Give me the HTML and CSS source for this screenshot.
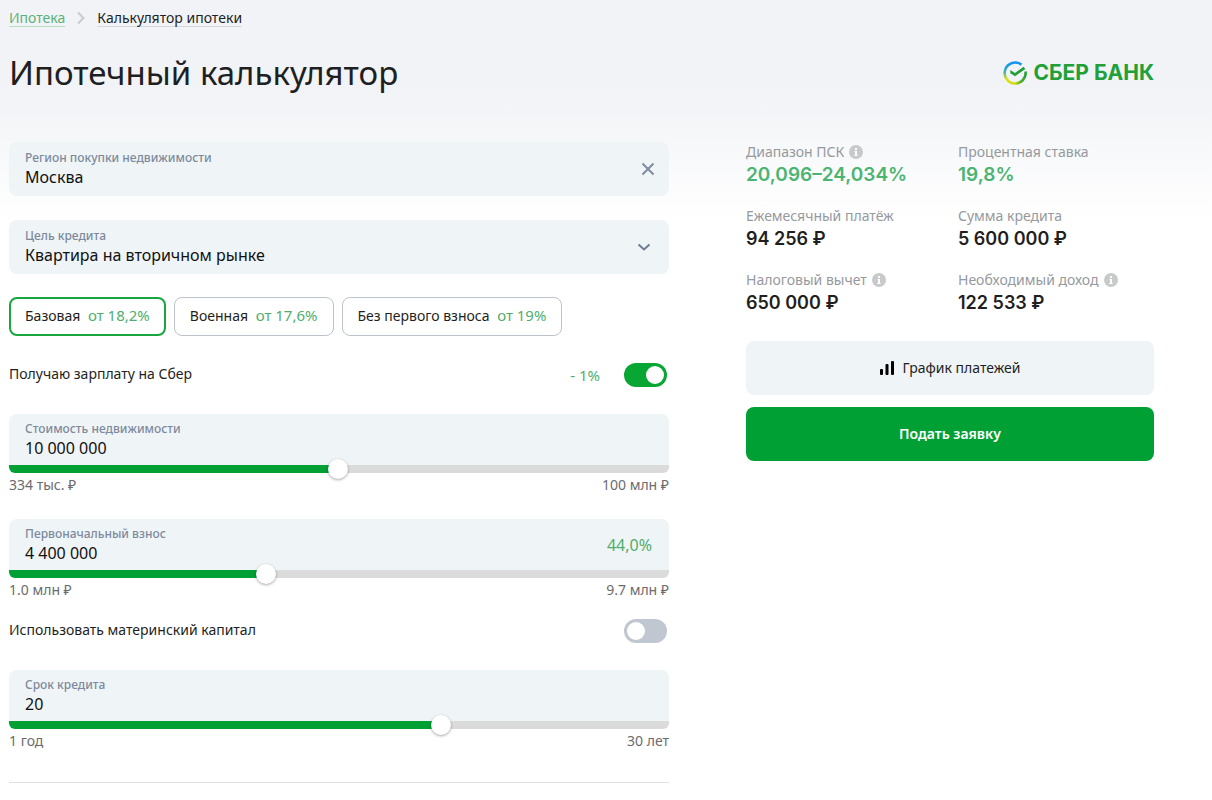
FILE: index.html
```html
<!DOCTYPE html>
<html lang="ru">
<head>
<meta charset="utf-8">
<meta name="viewport" content="width=device-width, initial-scale=1">
<title>Ипотечный калькулятор</title>
<link rel="stylesheet" href="styles.css">
</head>
<body>
<div class="page">
  <header class="header">
    <nav class="crumbs" aria-label="Навигация">
      <a class="crumb crumb-parent" href="#">Ипотека</a>
      <svg class="crumb-arrow" viewBox="0 0 8 14" aria-hidden="true"><path d="M1 1.500 6.500 7 1 12.500"/></svg>
      <a class="crumb" href="#">Калькулятор ипотеки</a>
    </nav>
    <div class="title-row">
      <h1 class="title">Ипотечный калькулятор</h1>
      <div class="logo">
        <svg class="logo-mark" viewBox="0 0 24 24" aria-hidden="true">
          <defs>
            <linearGradient id="ring-left" x1="0" y1="0" x2="0" y2="1">
              <stop offset="0" stop-color="#1593f2"/>
              <stop offset=".2" stop-color="#1f9be0"/>
              <stop offset=".5" stop-color="#55b99a"/>
              <stop offset=".8" stop-color="#e3e20b"/>
              <stop offset="1" stop-color="#d5dc16"/>
            </linearGradient>
            <linearGradient id="ring-right" x1="0" y1="0" x2="1" y2="0">
              <stop offset="0" stop-color="#d5dc16"/>
              <stop offset=".55" stop-color="#54ae2c"/>
              <stop offset="1" stop-color="#21a038"/>
            </linearGradient>
          </defs>
          <path d="M18.500 3.600A10.500 10.500 0 1 0 12 22.500" fill="none" stroke="url(#ring-left)" stroke-width="2.600"/>
          <path d="M12 22.500A10.500 10.500 0 0 0 22.500 10.500" fill="none" stroke="url(#ring-right)" stroke-width="2.600"/>
          <path d="M7.300 9 12 12 20.600 5.800 22.300 8.100 12 15.300 7.300 12.300Z" fill="#21a038"/>
        </svg>
        <span class="logo-text">СБЕР БАНК</span>
      </div>
    </div>
  </header>

  <main class="content">
    <form class="form">
      <div class="field">
        <label class="field-label" for="region">Регион покупки недвижимости</label>
        <input class="field-control" id="region" type="text" value="Москва">
        <button class="field-icon" type="button" aria-label="Очистить">
          <svg class="icon-close" viewBox="0 0 14 14" aria-hidden="true"><path d="M1.500 1.500l11 11M12.500 1.500l-11 11"/></svg>
        </button>
      </div>

      <div class="field">
        <label class="field-label" for="purpose">Цель кредита</label>
        <select class="field-control" id="purpose"><option>Квартира на вторичном рынке</option></select>
        <svg class="field-icon icon-chevron" viewBox="0 0 14 8" aria-hidden="true"><path d="M1.500 1.500 7 6.500l5.500-5"/></svg>
      </div>

      <div class="programs">
        <button class="program program-active" type="button" aria-pressed="true">Базовая <span class="rate">от 18,2%</span></button>
        <button class="program" type="button" aria-pressed="false">Военная <span class="rate">от 17,6%</span></button>
        <button class="program" type="button" aria-pressed="false">Без первого взноса <span class="rate">от 19%</span></button>
      </div>

      <div class="option">
        <label class="option-label" for="salary">Получаю зарплату на Сбер</label>
        <span class="rate">- 1%</span>
        <input class="switch" id="salary" type="checkbox" checked>
      </div>

      <div class="amount">
        <div class="field field-range">
          <label class="field-label" for="price">Стоимость недвижимости</label>
          <input class="field-control" id="price" type="text" value="10 000 000">
        </div>
        <input class="range" type="range" min="0" max="1000" value="498" style="--fill: 49.8%" aria-label="Стоимость недвижимости">
        <div class="limits"><span>334 тыс. ₽</span><span>100 млн ₽</span></div>
      </div>

      <div class="amount">
        <div class="field field-range">
          <label class="field-label" for="deposit">Первоначальный взнос</label>
          <input class="field-control" id="deposit" type="text" value="4 400 000">
          <span class="field-icon share">44,0%</span>
        </div>
        <input class="range" type="range" min="0" max="1000" value="386" style="--fill: 38.6%" aria-label="Первоначальный взнос">
        <div class="limits"><span>1.0 млн ₽</span><span>9.7 млн ₽</span></div>
      </div>

      <div class="option option-capital">
        <label class="option-label" for="capital">Использовать материнский капитал</label>
        <input class="switch" id="capital" type="checkbox">
      </div>

      <div class="amount">
        <div class="field field-range">
          <label class="field-label" for="term">Срок кредита</label>
          <input class="field-control" id="term" type="text" value="20">
        </div>
        <input class="range" type="range" min="0" max="1000" value="659" style="--fill: 65.9%" aria-label="Срок кредита">
        <div class="limits"><span>1 год</span><span>30 лет</span></div>
      </div>
      <hr class="divider">
    </form>

    <aside class="summary">
      <dl class="results">
        <div class="result">
          <dt class="result-name">Диапазон ПСК
            <svg class="info" viewBox="0 0 14 14" aria-hidden="true"><circle cx="7" cy="7" r="7" fill="#c7c9cb"/><path d="M6 3h2v2H6zM5.500 6H8v4h.7v1H5.300v-1H6V7h-.5z" fill="#fff"/></svg>
          </dt>
          <dd class="result-value result-green">20,096–24,034%</dd>
        </div>
        <div class="result">
          <dt class="result-name">Процентная ставка</dt>
          <dd class="result-value result-green">19,8%</dd>
        </div>
        <div class="result">
          <dt class="result-name">Ежемесячный платёж</dt>
          <dd class="result-value">94 256 ₽</dd>
        </div>
        <div class="result">
          <dt class="result-name">Сумма кредита</dt>
          <dd class="result-value">5 600 000 ₽</dd>
        </div>
        <div class="result">
          <dt class="result-name">Налоговый вычет
            <svg class="info" viewBox="0 0 14 14" aria-hidden="true"><circle cx="7" cy="7" r="7" fill="#c7c9cb"/><path d="M6 3h2v2H6zM5.500 6H8v4h.7v1H5.300v-1H6V7h-.5z" fill="#fff"/></svg>
          </dt>
          <dd class="result-value">650 000 ₽</dd>
        </div>
        <div class="result">
          <dt class="result-name">Необходимый доход
            <svg class="info" viewBox="0 0 14 14" aria-hidden="true"><circle cx="7" cy="7" r="7" fill="#c7c9cb"/><path d="M6 3h2v2H6zM5.500 6H8v4h.7v1H5.300v-1H6V7h-.5z" fill="#fff"/></svg>
          </dt>
          <dd class="result-value">122 533 ₽</dd>
        </div>
      </dl>
      <button class="action" type="button">
        <svg class="icon-bars" viewBox="0 0 14 14" aria-hidden="true"><rect x="0" y="8" width="3" height="6" rx="1"/><rect x="5.500" y="3" width="3" height="11" rx="1"/><rect x="11" y="0" width="3" height="14" rx="1"/></svg>
        График платежей
      </button>
      <button class="action action-primary" type="button">Подать заявку</button>
    </aside>
  </main>
</div>
</body>
</html>
```
FILE: styles.css
```css
* {
  box-sizing: border-box;
}

body {
  margin: 0;
  background: #fff linear-gradient(#f1f3f6 0, #f1f3f6 90px, #fff 220px) no-repeat;
  color: #1f1f22;
  font: 14px/20px "Noto Sans", "Open Sans", sans-serif;
}

button,
input,
select {
  margin: 0;
  padding: 0;
  border: 0;
  background: none;
  color: inherit;
  font: inherit;
}

button {
  cursor: pointer;
}

.page {
  padding: 8px 58px 16px 9px;
}

.crumbs {
  display: flex;
  align-items: center;
  gap: 12px;
}

.crumb {
  height: 19px;
  border-bottom: 1px solid #d5d9dc;
  color: #1f1f22;
  text-decoration: none;
}

.crumb-parent {
  border-color: #b3dfc0;
  color: #5ab27a;
}

.crumb-arrow {
  width: 8px;
  height: 14px;
  fill: none;
  stroke: #c9cccf;
  stroke-width: 2;
}

.title-row {
  display: flex;
  align-items: center;
  justify-content: space-between;
  margin: 24px 0 47px;
}

.title {
  margin: 0;
  font-size: 33px;
  font-weight: 400;
  line-height: 44px;
}

.logo {
  display: flex;
  align-items: center;
  gap: 6px;
}

.logo-mark {
  width: 24px;
  height: 24px;
}

.logo-text {
  color: #21a038;
  font: 700 21px/24px Inter, sans-serif;
}

.content {
  display: grid;
  grid-template-columns: 660fr 408fr;
  gap: 77px;
  align-items: start;
}

.field {
  display: flex;
  flex-direction: column;
  position: relative;
  height: 54px;
  margin-bottom: 24px;
  padding: 7px 16px 0;
  border-radius: 8px;
  background: #eff4f7;
}

.field-label {
  color: #7d8a9c;
  font-size: 12px;
  font-weight: 500;
  line-height: 18px;
}

.field-control {
  width: 100%;
  height: 20px;
  outline: 0;
  appearance: none;
  color: #111;
  font-size: 16px;
  line-height: 20px;
}

.field-icon {
  display: flex;
  align-items: center;
  position: absolute;
  top: 0;
  right: 14px;
  height: 100%;
}

.icon-close {
  width: 14px;
  height: 14px;
  fill: none;
  stroke: #7f8ca0;
  stroke-width: 2;
}

.icon-chevron {
  right: 18px;
  width: 14px;
  fill: none;
  stroke: #6f7c96;
  stroke-width: 2;
}

.programs {
  display: flex;
  flex-wrap: wrap;
  gap: 8px;
  margin: -1px 0 27px;
}

.program {
  height: 39px;
  padding: 0 15px 2px;
  border: 1px solid #bcc3cd;
  border-radius: 8px;
  background: #fff;
}

.program-active {
  padding: 0 14px 2px;
  border: 2px solid #19a63f;
}

.rate,
.share {
  color: #4fae6e;
  font-size: 15px;
}

.program .rate {
  margin-left: 4px;
}

.option {
  display: flex;
  align-items: center;
  gap: 24px;
  margin-bottom: 27px;
  padding-right: 2px;
}

.option-label {
  flex: 1;
  padding-bottom: 2px;
}

.switch {
  width: 43px;
  height: 24px;
  border-radius: 12px;
  appearance: none;
  background: #c1c7d1;
  cursor: pointer;
}

.switch::before {
  display: block;
  width: 18px;
  height: 18px;
  margin: 3px;
  border-radius: 50%;
  background: #fff;
  content: "";
}

.switch:checked {
  background: #08a632;
}

.switch:checked::before {
  margin-left: 22px;
}

.amount {
  margin-bottom: 24px;
}

.field-range {
  height: 51px;
  margin-bottom: 0;
  padding-top: 6px;
  border-radius: 8px 8px 0 0;
}

.share {
  right: 17px;
  font-size: 16px;
}

.range {
  display: block;
  position: relative;
  width: 100%;
  height: 20px;
  margin: -6px 0;
  appearance: none;
}

.range::-webkit-slider-runnable-track {
  height: 8px;
  border-radius: 0 0 6px 6px;
  background: linear-gradient(90deg, #00a034 var(--fill), #dbdbdb var(--fill));
}

.range::-webkit-slider-thumb {
  width: 20px;
  height: 20px;
  margin-top: -6px;
  border-radius: 50%;
  appearance: none;
  background: #fff;
  box-shadow: 0 1px 3px rgba(0, 0, 0, .35);
}

.limits {
  display: flex;
  justify-content: space-between;
  margin-top: 2px;
  color: #6b6b6e;
}

.option-capital {
  margin-top: -5px;
}

.divider {
  margin: 31px 0 0;
  border: 0;
  border-top: 1px solid #e0e0e0;
}

.results {
  display: grid;
  grid-template-columns: 212fr 196fr;
  row-gap: 18px;
  margin: 0 0 25px;
}

.result-name {
  display: flex;
  align-items: center;
  gap: 5px;
  color: #96999e;
}

.info {
  width: 14px;
  height: 14px;
}

.result-value {
  margin: 0;
  font: 600 18px/26px Inter, "Noto Sans", sans-serif;
}

.result-green {
  color: #4cb471;
  font-size: 19px;
}

.action {
  display: flex;
  align-items: center;
  justify-content: center;
  gap: 9px;
  width: 100%;
  height: 54px;
  margin-bottom: 12px;
  border-radius: 8px;
  background: #eff4f7;
}

.action-primary {
  background: #00a034;
  color: #fff;
  font-weight: 600;
}

.icon-bars {
  width: 14px;
  height: 14px;
}
```
